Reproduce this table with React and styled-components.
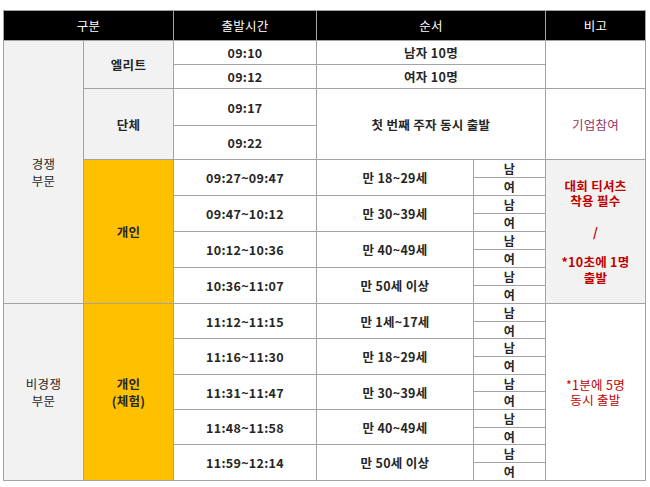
import React from 'react'
import styled, { createGlobalStyle } from 'styled-components'

const GlobalStyle = createGlobalStyle`
  body {
    margin: 0;
    background: #ffffff;
    font-family: "Noto Sans CJK KR", "Noto Sans", sans-serif;
  }
`

const ROWS = [
  '29px',
  '23px', '23px',
  '36px', '33px',
  '17px', '17px', '17px', '17px', '17px', '17px', '17px', '17px',
  '17px', '16px', '17px', '17px', '16px', '17px', '17px', '16px', '17px', '17px',
]

const competitive = [
  { time: '09:27~09:47', age: '만 18~29세' },
  { time: '09:47~10:12', age: '만 30~39세' },
  { time: '10:12~10:36', age: '만 40~49세' },
  { time: '10:36~11:07', age: '만 50세 이상' },
]

const casual = [
  { time: '11:12~11:15', age: '만 1세~17세' },
  { time: '11:16~11:30', age: '만 18~29세' },
  { time: '11:31~11:47', age: '만 30~39세' },
  { time: '11:48~11:58', age: '만 40~49세' },
  { time: '11:59~12:14', age: '만 50세 이상' },
]

const App = () => {
  const renderGroup = (list, startRow) =>
    list.map((item, i) => {
      const row = startRow + i * 2
      return (
        <React.Fragment key={item.time}>
          <Cell $col="3" $row={`${row} / span 2`} $bold>
            {item.time}
          </Cell>
          <Cell $col="4" $row={`${row} / span 2`} $bold>
            {item.age}
          </Cell>
          <Cell $col="5" $row={`${row}`} $bold $small>
            남
          </Cell>
          <Cell $col="5" $row={`${row + 1}`} $bold $small>
            여
          </Cell>
        </React.Fragment>
      )
    })

  return (
    <>
      <GlobalStyle />
      <Table>
        <HeadCell $col="1 / span 2" $row="1">구분</HeadCell>
        <HeadCell $col="3" $row="1">출발시간</HeadCell>
        <HeadCell $col="4 / span 2" $row="1">순서</HeadCell>
        <HeadCell $col="6" $row="1">비고</HeadCell>

        <Cell $col="1" $row="2 / span 12" $bg="#f2f2f2">
          경쟁
          <br />
          부문
        </Cell>
        <Cell $col="2" $row="2 / span 2" $bg="#f2f2f2" $bold>
          엘리트
        </Cell>
        <Cell $col="3" $row="2" $bold>09:10</Cell>
        <Cell $col="3" $row="3" $bold>09:12</Cell>
        <Cell $col="4 / span 2" $row="2" $bold>남자 10명</Cell>
        <Cell $col="4 / span 2" $row="3" $bold>여자 10명</Cell>
        <Cell $col="6" $row="2 / span 2" />

        <Cell $col="2" $row="4 / span 2" $bg="#f2f2f2" $bold>
          단체
        </Cell>
        <Cell $col="3" $row="4" $bold>09:17</Cell>
        <Cell $col="3" $row="5" $bold>09:22</Cell>
        <Cell $col="4 / span 2" $row="4 / span 2" $bold>
          첫 번째 주자 동시 출발
        </Cell>
        <Cell $col="6" $row="4 / span 2" $color="#953464">
          기업참여
        </Cell>

        <Cell $col="2" $row="6 / span 8" $bg="#ffc000" $bold>
          개인
        </Cell>
        {renderGroup(competitive, 6)}
        <Note $col="6" $row="6 / span 8" $bg="#f2f2f2" $bold>
          대회 티셔츠
          <br />
          착용 필수
          <br />
          <br />/
          <br />
          <br />
          *10초에 1명
          <br />
          출발
        </Note>

        <Cell $col="1" $row="14 / span 10" $bg="#f2f2f2">
          비경쟁
          <br />
          부문
        </Cell>
        <Cell $col="2" $row="14 / span 10" $bg="#ffc000" $bold>
          개인
          <br />
          (체험)
        </Cell>
        {renderGroup(casual, 14)}
        <Note $col="6" $row="14 / span 10">
          *1분에 5명
          <br />
          동시 출발
        </Note>
      </Table>
    </>
  )
}

const Table = styled.div`
  display: grid;
  grid-template-columns: 79px 89px 142px 156px 71px 99px;
  grid-template-rows: ${ROWS.join(' ')};
  gap: 1px;
  padding: 1px;
  margin: 10px 0 0 3px;
  width: max-content;
  background: #a3a3a3;
`

const Cell = styled.div`
  grid-column: ${(p) => p.$col};
  grid-row: ${(p) => p.$row};
  display: flex;
  align-items: center;
  justify-content: center;
  text-align: center;
  background: ${(p) => p.$bg || '#ffffff'};
  color: ${(p) => p.$color || '#262626'};
  font-size: ${(p) => (p.$small ? '12px' : '12.5px')};
  font-weight: ${(p) => (p.$bold ? 700 : 400)};
  line-height: 17px;
  letter-spacing: 0.3px;
  white-space: nowrap;
`

const HeadCell = styled(Cell)`
  background: #000000;
  color: #ffffff;
  font-weight: 400;
`

const Note = styled(Cell)`
  color: #c00000;
  line-height: 15.2px;
`

export default App
